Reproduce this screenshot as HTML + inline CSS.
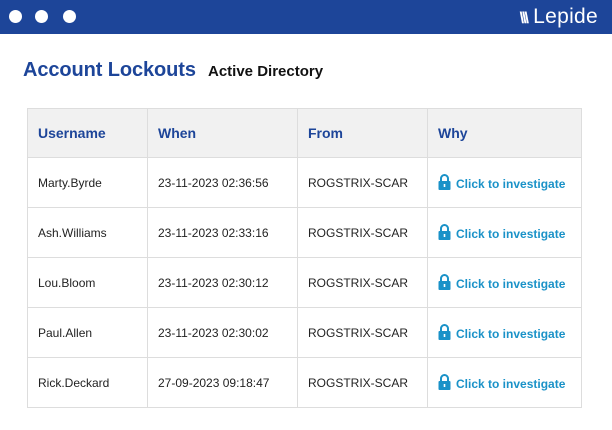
<!DOCTYPE html>
<html><head><style>
*{margin:0;padding:0;box-sizing:border-box}
body{width:612px;height:430px;background:#fff;font-family:"Liberation Sans",sans-serif;position:relative;overflow:hidden}
.bar{position:absolute;left:0;top:0;width:612px;height:34px;background:#1d4599}
.dot{position:absolute;top:10px;width:13px;height:13px;border-radius:50%;background:#fff}
.logo{position:absolute;right:14px;top:5px;color:#fff;font-size:21px;font-weight:300;letter-spacing:0.3px}
h1{position:absolute;left:23px;top:59px;font-size:20px;color:#1d4599;font-weight:bold;letter-spacing:-0.1px}
h2{position:absolute;left:208px;top:63px;font-size:15px;color:#111;font-weight:bold}
table{position:absolute;left:27px;top:108px;border-collapse:collapse;width:555px}
td,th{border:1px solid #ddd;height:50px;text-align:left;padding-left:10px;font-size:12px;color:#222}
th{background:#f1f1f1;color:#1d4599;font-size:14px;font-weight:bold;height:49px}
.w{color:#1a92c8;font-weight:bold;font-size:12px;white-space:nowrap}
.w svg{vertical-align:-2px;margin-right:5px}
</style></head><body>
<div class="bar"><div class="dot" style="left:9px"></div><div class="dot" style="left:35px"></div><div class="dot" style="left:63px"></div>
<div class="logo"><span style="font-weight:bold;font-size:16px;letter-spacing:-2px">\\\</span> Lepide</div></div>
<h1>Account Lockouts</h1><h2>Active Directory</h2>
<table>
<tr><th style="width:120px">Username</th><th style="width:150px">When</th><th style="width:130px">From</th><th>Why</th></tr>
<tr><td>Marty.Byrde</td><td>23-11-2023 02:36:56</td><td>ROGSTRIX-SCAR</td><td class="w"><svg width="13" height="16" viewBox="0 0 13 16"><path d="M3 7V4.5a3.5 3.5 0 0 1 7 0V7" stroke="#1a92c8" stroke-width="2" fill="none"/><rect x="0.5" y="7" width="12" height="9" rx="1" fill="#1a92c8"/><rect x="5.7" y="10" width="1.6" height="3" fill="#fff"/></svg>Click to investigate</td></tr>
<tr><td>Ash.Williams</td><td>23-11-2023 02:33:16</td><td>ROGSTRIX-SCAR</td><td class="w"><svg width="13" height="16" viewBox="0 0 13 16"><path d="M3 7V4.5a3.5 3.5 0 0 1 7 0V7" stroke="#1a92c8" stroke-width="2" fill="none"/><rect x="0.5" y="7" width="12" height="9" rx="1" fill="#1a92c8"/><rect x="5.7" y="10" width="1.6" height="3" fill="#fff"/></svg>Click to investigate</td></tr>
<tr><td>Lou.Bloom</td><td>23-11-2023 02:30:12</td><td>ROGSTRIX-SCAR</td><td class="w"><svg width="13" height="16" viewBox="0 0 13 16"><path d="M3 7V4.5a3.5 3.5 0 0 1 7 0V7" stroke="#1a92c8" stroke-width="2" fill="none"/><rect x="0.5" y="7" width="12" height="9" rx="1" fill="#1a92c8"/><rect x="5.7" y="10" width="1.6" height="3" fill="#fff"/></svg>Click to investigate</td></tr>
<tr><td>Paul.Allen</td><td>23-11-2023 02:30:02</td><td>ROGSTRIX-SCAR</td><td class="w"><svg width="13" height="16" viewBox="0 0 13 16"><path d="M3 7V4.5a3.5 3.5 0 0 1 7 0V7" stroke="#1a92c8" stroke-width="2" fill="none"/><rect x="0.5" y="7" width="12" height="9" rx="1" fill="#1a92c8"/><rect x="5.7" y="10" width="1.6" height="3" fill="#fff"/></svg>Click to investigate</td></tr>
<tr><td>Rick.Deckard</td><td>27-09-2023 09:18:47</td><td>ROGSTRIX-SCAR</td><td class="w"><svg width="13" height="16" viewBox="0 0 13 16"><path d="M3 7V4.5a3.5 3.5 0 0 1 7 0V7" stroke="#1a92c8" stroke-width="2" fill="none"/><rect x="0.5" y="7" width="12" height="9" rx="1" fill="#1a92c8"/><rect x="5.7" y="10" width="1.6" height="3" fill="#fff"/></svg>Click to investigate</td></tr>
</table>
</body></html>
